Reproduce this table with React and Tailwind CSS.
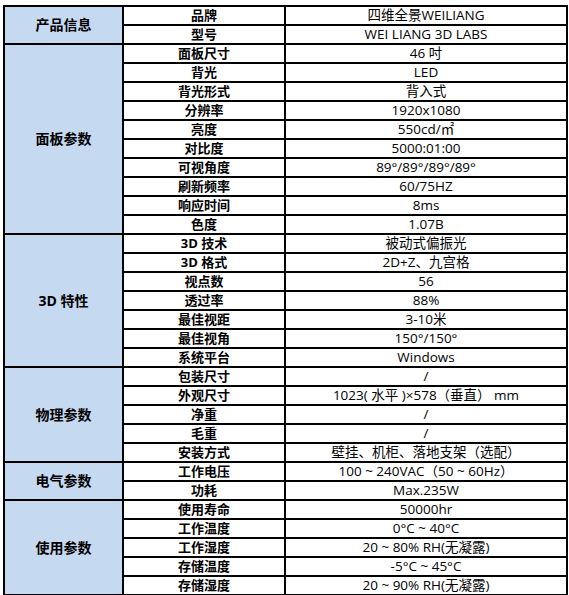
const groups = [
  {
    name: '产品信息',
    rows: [
      ['品牌', '四维全景WEILIANG'],
      ['型号', 'WEI LIANG 3D LABS'],
    ],
  },
  {
    name: '面板参数',
    rows: [
      ['面板尺寸', '46 吋'],
      ['背光', 'LED'],
      ['背光形式', '背入式'],
      ['分辨率', '1920x1080'],
      ['亮度', '550cd/㎡'],
      ['对比度', '5000:01:00'],
      ['可视角度', '89°/89°/89°/89°'],
      ['刷新频率', '60/75HZ'],
      ['响应时间', '8ms'],
      ['色度', '1.07B'],
    ],
  },
  {
    name: '3D 特性',
    rows: [
      ['3D 技术', '被动式偏振光'],
      ['3D 格式', '2D+Z、九宫格'],
      ['视点数', '56'],
      ['透过率', '88%'],
      ['最佳视距', '3-10米'],
      ['最佳视角', '150°/150°'],
      ['系统平台', 'Windows'],
    ],
  },
  {
    name: '物理参数',
    rows: [
      ['包装尺寸', '/'],
      ['外观尺寸', '1023( 水平 )×578（垂直） mm'],
      ['净重', '/'],
      ['毛重', '/'],
      ['安装方式', '壁挂、机柜、落地支架（选配）'],
    ],
  },
  {
    name: '电气参数',
    rows: [
      ['工作电压', '100 ~ 240VAC（50 ~ 60Hz）'],
      ['功耗', 'Max.235W'],
    ],
  },
  {
    name: '使用参数',
    rows: [
      ['使用寿命', '50000hr'],
      ['工作温度', '0°C ~ 40°C'],
      ['工作湿度', '20 ~ 80% RH(无凝露)'],
      ['存储温度', '-5°C ~ 45°C'],
      ['存储湿度', '20 ~ 90% RH(无凝露)'],
    ],
  },
]

const font = { fontFamily: '"Open Sans", "Noto Sans CJK SC", sans-serif' }

export default function App() {
  return (
    <div className="w-[569px] h-[595px] bg-white pl-[3px] pt-[5px]" style={font}>
      <table className="w-[563px] table-fixed border-collapse border-2 border-black text-black">
        <colgroup>
          <col className="w-[119px]" />
          <col className="w-[162px]" />
          <col className="w-[282px]" />
        </colgroup>
        <tbody>
          {groups.map(g =>
            g.rows.map(([label, value], i) => (
              <tr key={g.name + label} className="h-[19px]">
                {i === 0 && (
                  <td rowSpan={g.rows.length}
                    className="border-2 border-black bg-[#c5d9f1] text-center align-middle text-[14px] font-bold leading-none">
                    {g.name}
                  </td>
                )}
                <td className="border-2 border-black p-0 text-center text-[13px] font-bold leading-[15px]">{label}</td>
                <td className="border-2 border-black p-0 text-center text-[13.5px] leading-[15px] whitespace-nowrap">{value}</td>
              </tr>
            ))
          )}
        </tbody>
      </table>
    </div>
  )
}
